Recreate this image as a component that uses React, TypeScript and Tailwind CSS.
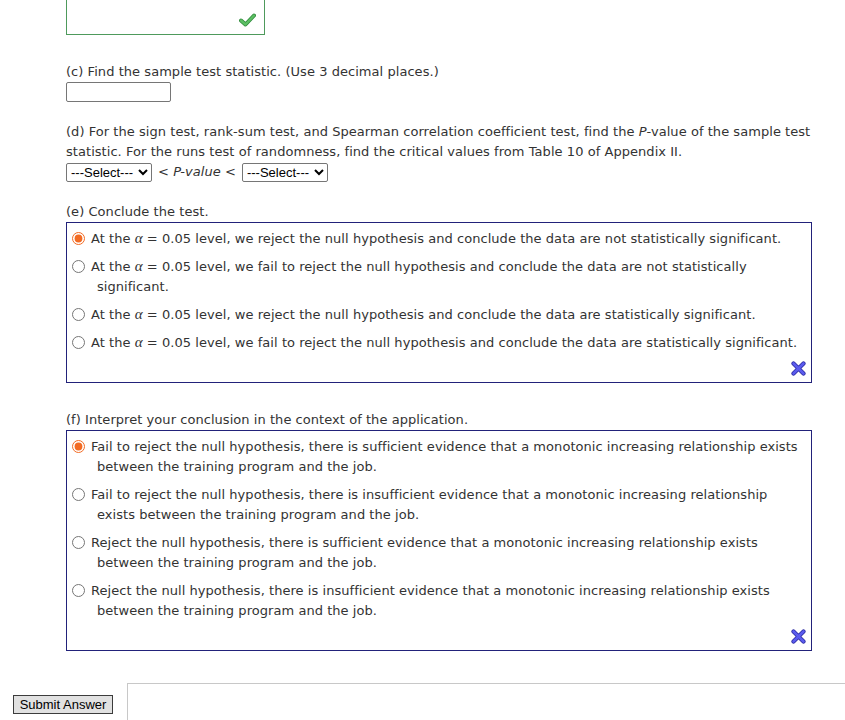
import React from 'react';

const textFont = { fontFamily: '"DejaVu Sans", Verdana, sans-serif' };

function XMark() {
  return (
    <svg width="15" height="15" viewBox="0 0 15 15">
      <path d="M2.5 2.5 L12.5 12.5 M12.5 2.5 L2.5 12.5" stroke="#2a2aa0" strokeWidth="4.2" strokeLinecap="round" />
      <path d="M2.5 2.5 L12.5 12.5 M12.5 2.5 L2.5 12.5" stroke="#5b5bee" strokeWidth="2.6" strokeLinecap="round" />
    </svg>
  );
}

function Check() {
  return (
    <svg width="17" height="14" viewBox="0 0 17 14">
      <path d="M2 7.5 L6.5 11.5 L15 2.5" fill="none" stroke="#2f8a3c" strokeWidth="4" strokeLinecap="round" strokeLinejoin="round" />
      <path d="M2 7.5 L6.5 11.5 L15 2.5" fill="none" stroke="#5cbf63" strokeWidth="2.4" strokeLinecap="round" strokeLinejoin="round" />
    </svg>
  );
}

function Alpha() {
  return <i className="font-['Liberation_Serif',serif] text-[15px] leading-[0]">α</i>;
}

interface OptionProps {
  checked?: boolean;
  name: string;
  children: React.ReactNode;
}

function Option({ checked, name, children }: OptionProps) {
  return (
    <div className="pl-[30px] -indent-[25px] leading-[20px]">
      <input
        type="radio"
        name={name}
        defaultChecked={checked}
        className="w-[13px] h-[13px] m-0 mr-[6px] align-[-2px] accent-[#f26b24]"
      />
      {children}
    </div>
  );
}

export default function App() {
  return (
    <div className="relative w-[845px] h-[720px] bg-white overflow-hidden text-[13px] tracking-[0.05px] text-[#333]" style={textFont}>
      <div className="pl-[66px]">
        {/* (b) answered box */}
        <div className="w-[199px] h-[45px] -mt-[10px] border border-[#4e9a5c] flex items-end justify-end pr-[8px] pb-[7px]">
          <Check />
        </div>

        {/* (c) */}
        <div className="mt-[27px] leading-[20px]">(c) Find the sample test statistic. (Use 3 decimal places.)</div>
        <input type="text" className="block w-[105px] h-[20px] border border-[#767676] rounded-[2px] bg-white" />

        {/* (d) */}
        <div className="mt-[20px] leading-[20px] whitespace-nowrap">
          (d) For the sign test, rank-sum test, and Spearman correlation coefficient test, find the <i>P</i>-value of the sample test
          <br />
          statistic. For the runs test of randomness, find the critical values from Table 10 of Appendix II.
        </div>
        <div className="flex items-center gap-[6px] h-[20px]">
          <select className="h-[19px] w-[86px] border border-[#767676] rounded-[2px] text-[13px] tracking-normal text-black bg-white font-['Liberation_Sans',Arial,sans-serif]">
            <option>---Select---</option>
          </select>
          <span>
            &lt; <i>P-value</i> &lt;
          </span>
          <select className="h-[19px] w-[86px] border border-[#767676] rounded-[2px] text-[13px] tracking-normal text-black bg-white font-['Liberation_Sans',Arial,sans-serif]">
            <option>---Select---</option>
          </select>
        </div>

        {/* (e) */}
        <div className="mt-[20px] leading-[20px]">(e) Conclude the test.</div>
        <div className="w-[746px] border border-[#22227a] pt-[6px]">
          <div className="flex flex-col gap-[8px]">
            <Option name="e" checked>
              At the <Alpha /> = 0.05 level, we reject the null hypothesis and conclude the data are not statistically significant.
            </Option>
            <Option name="e">
              At the <Alpha /> = 0.05 level, we fail to reject the null hypothesis and conclude the data are not statistically
              <br />
              significant.
            </Option>
            <Option name="e">
              At the <Alpha /> = 0.05 level, we reject the null hypothesis and conclude the data are statistically significant.
            </Option>
            <Option name="e">
              At the <Alpha /> = 0.05 level, we fail to reject the null hypothesis and conclude the data are statistically significant.
            </Option>
          </div>
          <div className="h-[29px] flex justify-end items-start pt-[8px] pr-[5px]">
            <XMark />
          </div>
        </div>

        {/* (f) */}
        <div className="mt-[27px] leading-[20px]">(f) Interpret your conclusion in the context of the application.</div>
        <div className="w-[746px] border border-[#22227a] pt-[6px]">
          <div className="flex flex-col gap-[8px]">
            <Option name="f" checked>
              Fail to reject the null hypothesis, there is sufficient evidence that a monotonic increasing relationship exists
              <br />
              between the training program and the job.
            </Option>
            <Option name="f">
              Fail to reject the null hypothesis, there is insufficient evidence that a monotonic increasing relationship
              <br />
              exists between the training program and the job.
            </Option>
            <Option name="f">
              Reject the null hypothesis, there is sufficient evidence that a monotonic increasing relationship exists
              <br />
              between the training program and the job.
            </Option>
            <Option name="f">
              Reject the null hypothesis, there is insufficient evidence that a monotonic increasing relationship exists
              <br />
              between the training program and the job.
            </Option>
          </div>
          <div className="h-[29px] flex justify-end items-start pt-[8px] pr-[5px]">
            <XMark />
          </div>
        </div>
      </div>

      {/* footer */}
      <div className="flex mt-[32px]">
        <div className="w-[127px] pt-[12px] pl-[13px]">
          <button className="w-[100px] h-[19px] bg-[#e1e1e1] border border-[#3c3c3c] text-[13px] tracking-normal leading-[17px] text-black font-['Liberation_Sans',Arial,sans-serif]">
            Submit Answer
          </button>
        </div>
        <div className="flex-1 h-[60px] border-t border-l border-[#c8c8c8]" />
      </div>
    </div>
  );
}
